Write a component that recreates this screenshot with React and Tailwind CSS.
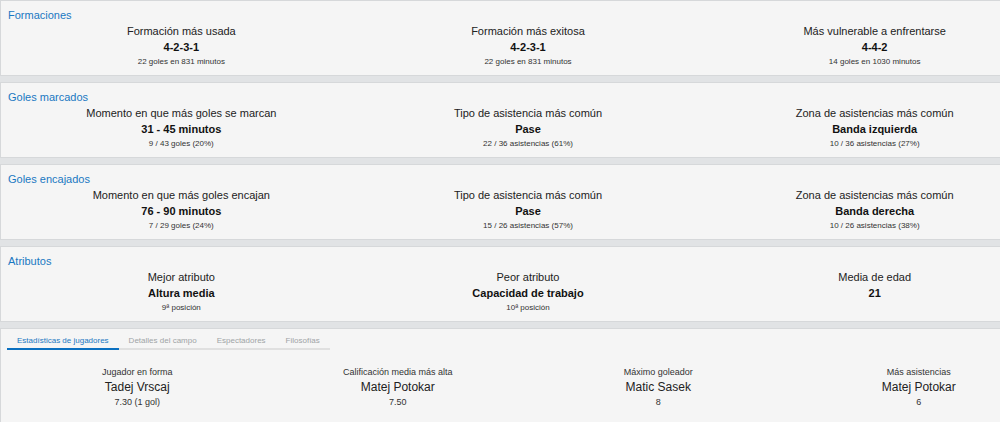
import { useState } from "react";

const sections = [
  {
    title: "Formaciones",
    items: [
      ["Formación más usada", "4-2-3-1", "22 goles en 831 minutos"],
      ["Formación más exitosa", "4-2-3-1", "22 goles en 831 minutos"],
      ["Más vulnerable a enfrentarse", "4-4-2", "14 goles en 1030 minutos"],
    ],
  },
  {
    title: "Goles marcados",
    items: [
      ["Momento en que más goles se marcan", "31 - 45 minutos", "9 / 43 goles (20%)"],
      ["Tipo de asistencia más común", "Pase", "22 / 36 asistencias (61%)"],
      ["Zona de asistencias más común", "Banda izquierda", "10 / 36 asistencias (27%)"],
    ],
  },
  {
    title: "Goles encajados",
    items: [
      ["Momento en que más goles encajan", "76 - 90 minutos", "7 / 29 goles (24%)"],
      ["Tipo de asistencia más común", "Pase", "15 / 26 asistencias (57%)"],
      ["Zona de asistencias más común", "Banda derecha", "10 / 26 asistencias (38%)"],
    ],
  },
  {
    title: "Atributos",
    items: [
      ["Mejor atributo", "Altura media", "9ª posición"],
      ["Peor atributo", "Capacidad de trabajo", "10ª posición"],
      ["Media de edad", "21", ""],
    ],
  },
];

const tabs = ["Estadísticas de jugadores", "Detalles del campo", "Espectadores", "Filosofías"];

const players = [
  ["Jugador en forma", "Tadej Vrscaj", "7.30 (1 gol)"],
  ["Calificación media más alta", "Matej Potokar", "7.50"],
  ["Máximo goleador", "Matic Sasek", "8"],
  ["Más asistencias", "Matej Potokar", "6"],
];

function Section({ title, items }) {
  return (
    <section className="border border-[#d6d8da] bg-[#f5f5f5] px-[7px] py-[6px]">
      <h2 className="text-[11px] leading-4 text-[#1a78c2]">{title}</h2>
      <div className="grid grid-cols-3 text-center text-[11px] leading-4 text-[#222]">
        {items.map(([label, value, detail]) => (
          <div key={label}>
            <p>{label}</p>
            <p className="font-bold text-[#111]">{value}</p>
            <p className="text-[8px] leading-[14px] text-[#333]">{detail}</p>
          </div>
        ))}
      </div>
    </section>
  );
}

export default function App() {
  const [active, setActive] = useState(0);
  return (
    <div className="h-screen overflow-hidden bg-[#e1e3e5] font-['Liberation_Sans',Arial,sans-serif]">
      <main className="-mr-14 flex min-h-full flex-col gap-[6px]">
        {sections.map((s) => (
          <Section key={s.title} {...s} />
        ))}
        <section className="grow border border-b-0 border-[#d6d8da] bg-[#f5f5f5] px-[6px] pt-[5px]">
          <div role="tablist" className="flex text-[8px] leading-[14px]">
            {tabs.map((t, i) => (
              <button
                key={t}
                role="tab"
                aria-selected={active === i}
                onClick={() => setActive(i)}
                className={
                  active === i
                    ? "border-b-2 border-[#0b70c0] px-[10px] text-[#1a78c2]"
                    : "border-b-2 border-[#e0e0e0] px-[10px] text-[#a0a4a6]"
                }
              >
                {t}
              </button>
            ))}
          </div>
          <div className="grid grid-cols-4 pt-[15px] text-center text-[9px] leading-[14px] text-[#333]">
            {players.map(([label, name, detail]) => (
              <div key={label}>
                <p>{label}</p>
                <p className="text-[12px] leading-4 text-[#222]">{name}</p>
                <p>{detail}</p>
              </div>
            ))}
          </div>
        </section>
      </main>
    </div>
  );
}
